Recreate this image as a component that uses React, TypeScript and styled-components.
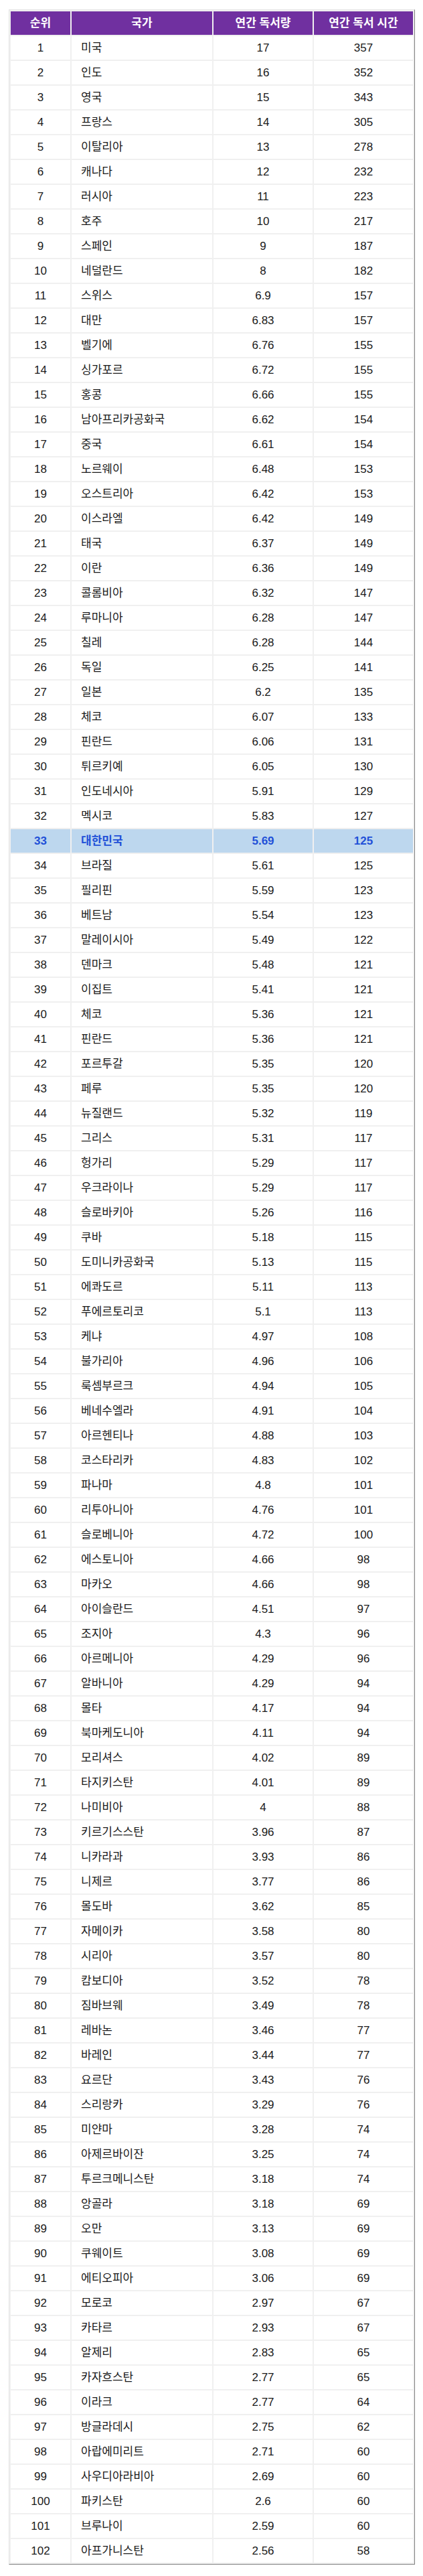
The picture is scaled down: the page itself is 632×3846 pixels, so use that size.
import React from "react";
import styled, { createGlobalStyle } from "styled-components";

type Row = [string, string, string];

const rows: Row[] = [
  ["미국", "17", "357"],
  ["인도", "16", "352"],
  ["영국", "15", "343"],
  ["프랑스", "14", "305"],
  ["이탈리아", "13", "278"],
  ["캐나다", "12", "232"],
  ["러시아", "11", "223"],
  ["호주", "10", "217"],
  ["스페인", "9", "187"],
  ["네덜란드", "8", "182"],
  ["스위스", "6.9", "157"],
  ["대만", "6.83", "157"],
  ["벨기에", "6.76", "155"],
  ["싱가포르", "6.72", "155"],
  ["홍콩", "6.66", "155"],
  ["남아프리카공화국", "6.62", "154"],
  ["중국", "6.61", "154"],
  ["노르웨이", "6.48", "153"],
  ["오스트리아", "6.42", "153"],
  ["이스라엘", "6.42", "149"],
  ["태국", "6.37", "149"],
  ["이란", "6.36", "149"],
  ["콜롬비아", "6.32", "147"],
  ["루마니아", "6.28", "147"],
  ["칠레", "6.28", "144"],
  ["독일", "6.25", "141"],
  ["일본", "6.2", "135"],
  ["체코", "6.07", "133"],
  ["핀란드", "6.06", "131"],
  ["튀르키예", "6.05", "130"],
  ["인도네시아", "5.91", "129"],
  ["멕시코", "5.83", "127"],
  ["대한민국", "5.69", "125"],
  ["브라질", "5.61", "125"],
  ["필리핀", "5.59", "123"],
  ["베트남", "5.54", "123"],
  ["말레이시아", "5.49", "122"],
  ["덴마크", "5.48", "121"],
  ["이집트", "5.41", "121"],
  ["체코", "5.36", "121"],
  ["핀란드", "5.36", "121"],
  ["포르투갈", "5.35", "120"],
  ["페루", "5.35", "120"],
  ["뉴질랜드", "5.32", "119"],
  ["그리스", "5.31", "117"],
  ["헝가리", "5.29", "117"],
  ["우크라이나", "5.29", "117"],
  ["슬로바키아", "5.26", "116"],
  ["쿠바", "5.18", "115"],
  ["도미니카공화국", "5.13", "115"],
  ["에콰도르", "5.11", "113"],
  ["푸에르토리코", "5.1", "113"],
  ["케냐", "4.97", "108"],
  ["불가리아", "4.96", "106"],
  ["룩셈부르크", "4.94", "105"],
  ["베네수엘라", "4.91", "104"],
  ["아르헨티나", "4.88", "103"],
  ["코스타리카", "4.83", "102"],
  ["파나마", "4.8", "101"],
  ["리투아니아", "4.76", "101"],
  ["슬로베니아", "4.72", "100"],
  ["에스토니아", "4.66", "98"],
  ["마카오", "4.66", "98"],
  ["아이슬란드", "4.51", "97"],
  ["조지아", "4.3", "96"],
  ["아르메니아", "4.29", "96"],
  ["알바니아", "4.29", "94"],
  ["몰타", "4.17", "94"],
  ["북마케도니아", "4.11", "94"],
  ["모리셔스", "4.02", "89"],
  ["타지키스탄", "4.01", "89"],
  ["나미비아", "4", "88"],
  ["키르기스스탄", "3.96", "87"],
  ["니카라과", "3.93", "86"],
  ["니제르", "3.77", "86"],
  ["몰도바", "3.62", "85"],
  ["자메이카", "3.58", "80"],
  ["시리아", "3.57", "80"],
  ["캄보디아", "3.52", "78"],
  ["짐바브웨", "3.49", "78"],
  ["레바논", "3.46", "77"],
  ["바레인", "3.44", "77"],
  ["요르단", "3.43", "76"],
  ["스리랑카", "3.29", "76"],
  ["미얀마", "3.28", "74"],
  ["아제르바이잔", "3.25", "74"],
  ["투르크메니스탄", "3.18", "74"],
  ["앙골라", "3.18", "69"],
  ["오만", "3.13", "69"],
  ["쿠웨이트", "3.08", "69"],
  ["에티오피아", "3.06", "69"],
  ["모로코", "2.97", "67"],
  ["카타르", "2.93", "67"],
  ["알제리", "2.83", "65"],
  ["카자흐스탄", "2.77", "65"],
  ["이라크", "2.77", "64"],
  ["방글라데시", "2.75", "62"],
  ["아랍에미리트", "2.71", "60"],
  ["사우디아라비아", "2.69", "60"],
  ["파키스탄", "2.6", "60"],
  ["브루나이", "2.59", "60"],
  ["아프가니스탄", "2.56", "58"],
];

const HIGHLIGHT = "대한민국";

const GlobalStyle = createGlobalStyle`
  body {
    margin: 0;
    background: #ffffff;
  }
`;

const Page = styled.div`
  padding: 14px 0 0 13px;
  font-family: "Liberation Sans", "Noto Sans CJK KR", sans-serif;
`;

const Table = styled.table`
  width: 605px;
  table-layout: fixed;
  border-collapse: separate;
  border-spacing: 2px;
  background: #f0f0f0;
  border-top: 1px solid #e4e4e4;
  border-left: 1px solid #e4e4e4;
  border-right: 1px solid #7f7f7f;
  border-bottom: 1px solid #7f7f7f;
`;

const HeadCell = styled.th<{ $w: number }>`
  width: ${(p) => p.$w}px;
  height: 35px;
  padding: 0;
  background: #7030a0;
  color: #ffffff;
  font-size: 17px;
  font-weight: bold;
  line-height: 20px;
  text-align: center;
  vertical-align: middle;
`;

const BodyRow = styled.tr<{ $hl?: boolean }>`
  background: ${(p) => (p.$hl ? "#bdd7ee" : "#ffffff")};
  color: ${(p) => (p.$hl ? "#2150d8" : "#1a1a1a")};
  font-weight: ${(p) => (p.$hl ? "bold" : "normal")};
`;

const Cell = styled.td<{ $left?: boolean }>`
  height: 35px;
  padding: ${(p) => (p.$left ? "0 0 0 14px" : "0")};
  font-size: 17px;
  line-height: 20px;
  text-align: ${(p) => (p.$left ? "left" : "center")};
  vertical-align: middle;
  white-space: nowrap;
`;

export default function App() {
  return (
    <>
      <GlobalStyle />
      <Page>
        <Table>
          <thead>
            <tr>
              <HeadCell $w={89}>순위</HeadCell>
              <HeadCell $w={210}>국가</HeadCell>
              <HeadCell $w={148}>연간 독서량</HeadCell>
              <HeadCell $w={148}>연간 독서 시간</HeadCell>
            </tr>
          </thead>
          <tbody>
            {rows.map(([name, books, hours], i) => (
              <BodyRow key={i} $hl={name === HIGHLIGHT}>
                <Cell>{i + 1}</Cell>
                <Cell $left>{name}</Cell>
                <Cell>{books}</Cell>
                <Cell>{hours}</Cell>
              </BodyRow>
            ))}
          </tbody>
        </Table>
      </Page>
    </>
  );
}
